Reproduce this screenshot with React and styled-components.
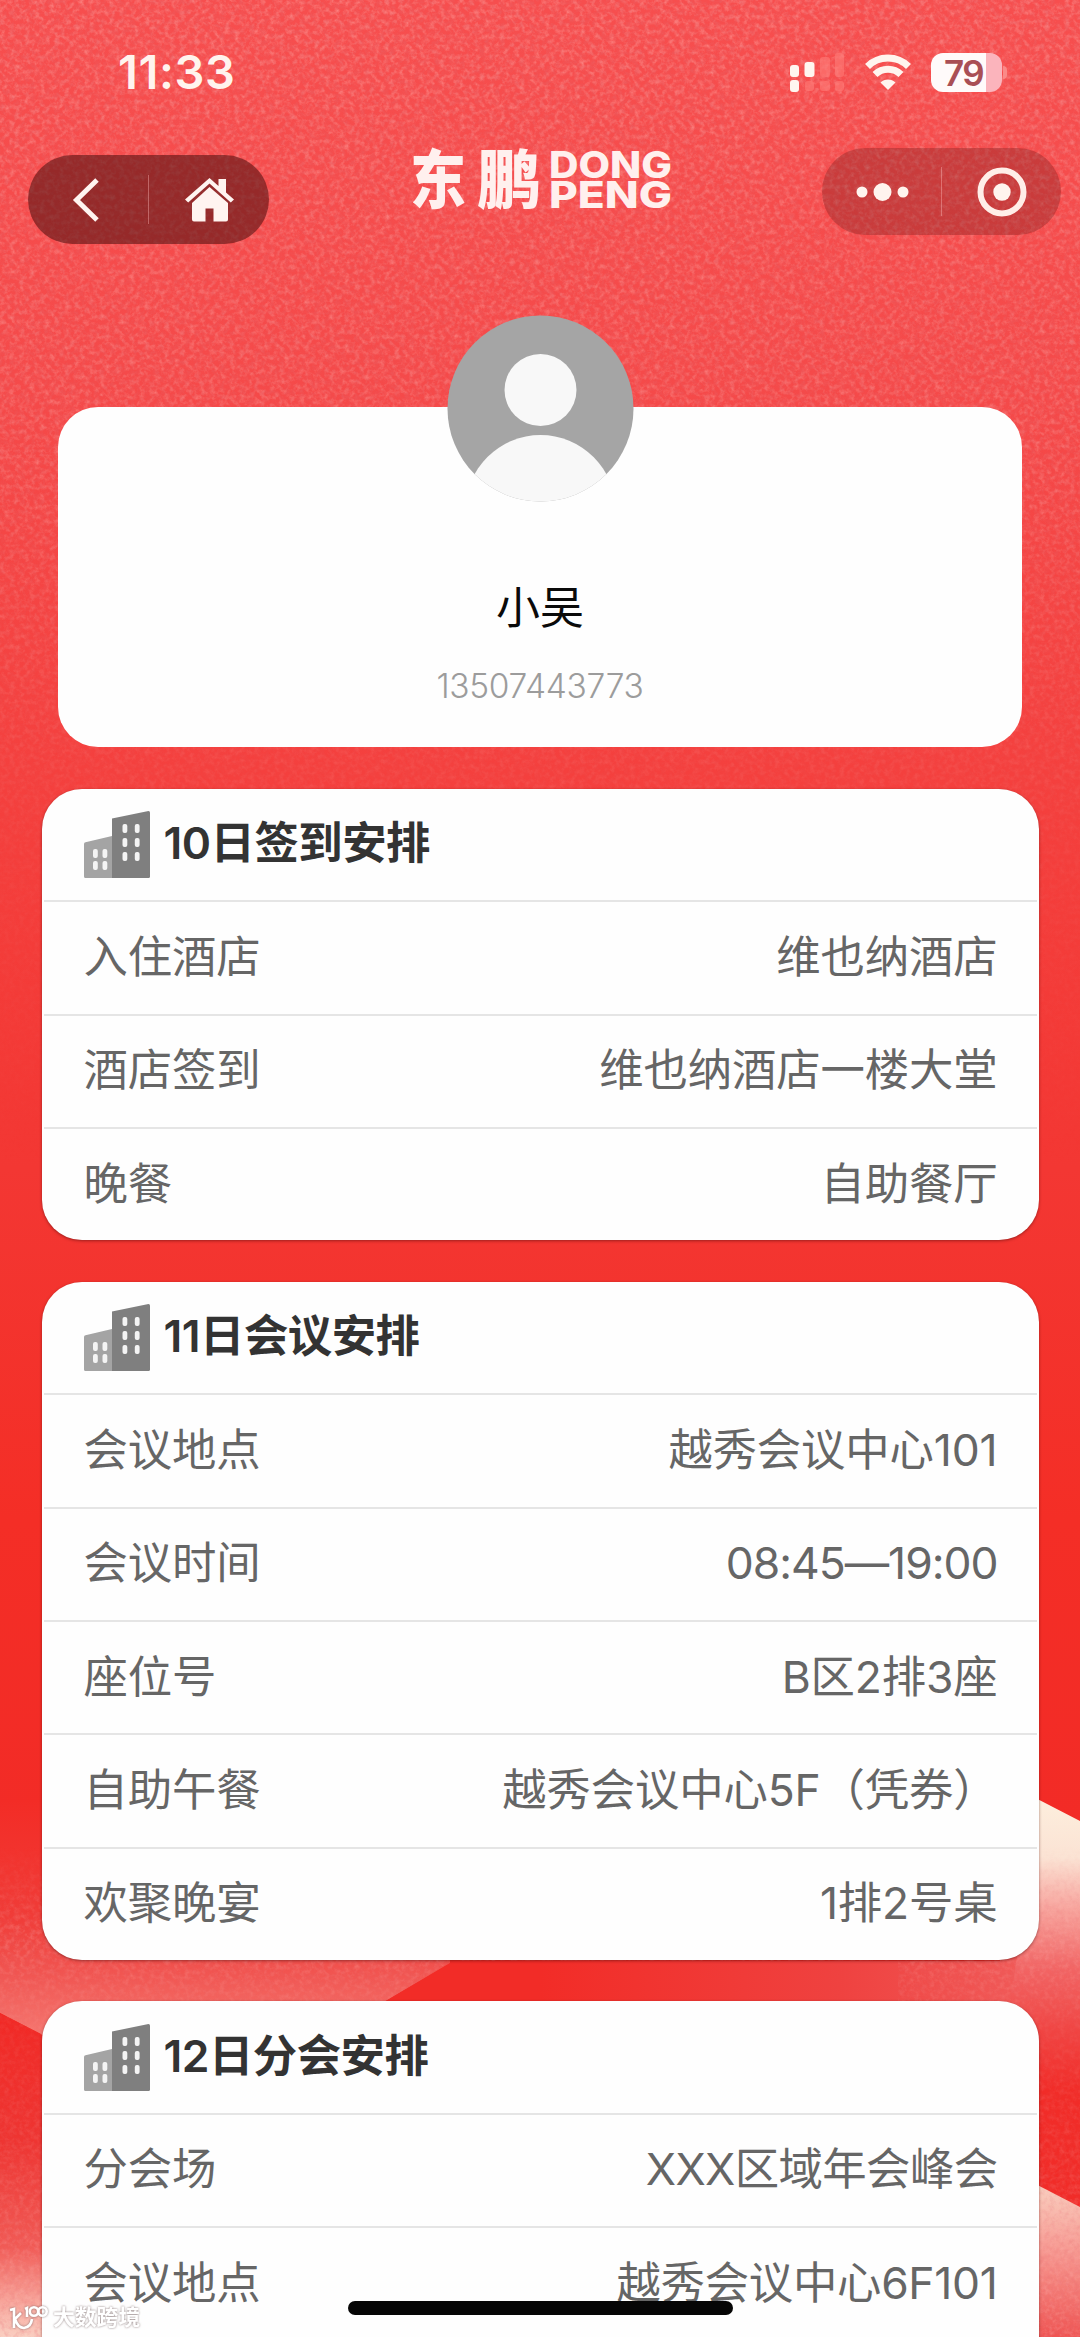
import React from 'react'
import styled, { createGlobalStyle } from 'styled-components'

const GlobalStyle = createGlobalStyle`
  * {
    box-sizing: border-box;
  }
  body {
    margin: 0;
    background: #f43a36;
    font-family: Inter, 'Noto Sans CJK SC', sans-serif;
  }
  p, h2 {
    margin: 0;
  }
  svg {
    display: block;
  }
`

let Page = styled.div`
  position: relative;
  width: 1080px;
  height: 2337px;
  overflow: hidden;
`
let Backdrop = styled.svg`
  position: absolute;
  left: 0;
  top: 0;
`
let Screen = styled.div`
  position: relative;
  display: flex;
  flex-direction: column;
`
let StatusBar = styled.div`
  display: flex;
  justify-content: space-between;
  align-items: center;
  height: 144px;
  padding: 0 78px 0 118px;
`
let Clock = styled.span`
  font-size: 47px;
  font-weight: 600;
  letter-spacing: 0.6px;
  line-height: 56px;
  color: #fff4ee;
`
let StatusIcons = styled.div`
  display: flex;
  align-items: center;
  gap: 20px;
`
let Battery = styled.div`
  position: relative;
  width: 71px;
  height: 39px;
  border-radius: 12px;
  background: linear-gradient(90deg, #fffafa 0 55px, #fbb4bc 55px);
  font-size: 35px;
  font-weight: 600;
  letter-spacing: -1.5px;
  line-height: 40px;
  padding-left: 13px;
  color: #a94f55;

  &::after {
    content: '';
    position: absolute;
    right: -5px;
    top: 13px;
    width: 4px;
    height: 13px;
    border-radius: 0 4px 4px 0;
    background: #fa8a88;
  }
`
let NavBar = styled.div`
  display: grid;
  grid-template-columns: 241px 1fr 239px;
  align-items: start;
  height: 170px;
  padding: 4px 19px 0 28px;
`
let Capsule = styled.div`
  display: flex;
  align-items: center;
  height: ${(props) => (props.$dark ? '89px' : '87px')};
  margin-top: ${(props) => (props.$dark ? '7px' : '0')};
  border-radius: 45px;
  background: ${(props) => (props.$dark ? 'rgba(86, 18, 18, 0.6)' : 'rgba(120, 28, 30, 0.35)')};
`
let CapsuleItem = styled.div`
  flex: 1;
  display: flex;
  justify-content: center;
  align-items: center;
`
let CapsuleLine = styled.div`
  width: 1px;
  height: 49px;
  background: rgba(255, 190, 190, 0.4);
`
let LogoBox = styled.div`
  display: flex;
  justify-content: center;
  margin-top: -24px;
  padding-right: 5px;
`
let Profile = styled.section`
  display: flex;
  flex-direction: column;
  align-items: center;
  height: 340px;
  margin: 93px 58px 42px;
  border-radius: 40px;
  background: #fefefe;
`
let Avatar = styled.svg`
  margin-top: -92.5px;
`
let UserName = styled.p`
  margin-top: 74px;
  font-size: 44px;
  line-height: 64px;
  color: #0a0a0a;
`
let Phone = styled.p`
  margin-top: 26.5px;
  font-size: 33.5px;
  font-weight: 300;
  letter-spacing: -0.3px;
  line-height: 40px;
  color: #9c9c9c;
`
let Card = styled.section`
  margin: 0 41.5px 41.3px;
  padding: 0 2px;
  border-radius: 40px;
  background: #fefefe;
  box-shadow: 0 1px 3px rgba(70, 10, 10, 0.5);

  /* the last card runs on below the fold */
  &:last-child {
    padding-bottom: 80px;
  }
`
let CardHead = styled.div`
  display: flex;
  align-items: center;
  gap: 14px;
  height: 113.4px;
  padding: 0 40px 0;
  border-bottom: 2.5px solid #e5e5e5;
`
let CardTitle = styled.h2`
  margin-top: -3px;
  font-size: 44.4px;
  font-weight: 600;
  letter-spacing: -0.5px;
  line-height: 64px;
  color: #333;
`
let Row = styled.div`
  display: flex;
  justify-content: space-between;
  align-items: center;
  height: 113.4px;
  padding: 0 39px 2px 40px;
  border-bottom: 2.5px solid #e5e5e5;
  font-size: 44.4px;
  letter-spacing: -0.15px;
  line-height: 64px;
  color: #666;

  &:last-child {
    height: 111.3px;
    border-bottom: none;
  }
`
let Value = styled.span`
  letter-spacing: ${(props) => props.$spacing || '-0.15px'};
`
let HomeIndicator = styled.div`
  position: absolute;
  left: 348px;
  top: 2301px;
  width: 385px;
  height: 14px;
  border-radius: 7px;
  background: #060606;
`
let Watermark = styled.div`
  position: absolute;
  left: 8px;
  top: 2302px;
  display: flex;
  align-items: center;
  gap: 5px;
  font-size: 21.8px;
  font-weight: 700;
  line-height: 30px;
  color: #fff;
  filter: drop-shadow(0 0 1px rgba(110, 90, 90, 0.75));
`

const days = [
  {
    title: '10日签到安排',
    rows: [
      ['入住酒店', '维也纳酒店'],
      ['酒店签到', '维也纳酒店一楼大堂'],
      ['晚餐', '自助餐厅'],
    ],
  },
  {
    title: '11日会议安排',
    rows: [
      ['会议地点', '越秀会议中心101'],
      ['会议时间', '08:45—19:00', '-1px'],
      ['座位号', 'B区2排3座'],
      ['自助午餐', '越秀会议中心5F（凭券）'],
      ['欢聚晚宴', '1排2号桌'],
    ],
  },
  {
    title: '12日分会安排',
    rows: [
      ['分会场', 'XXX区域年会峰会', '-0.6px'],
      ['会议地点', '越秀会议中心6F101', '-0.3px'],
    ],
  },
]

// red paper texture with the folded ribbons near the bottom
function Background() {
  return (
    <Backdrop width="1080" height="2337" viewBox="0 0 1080 2337">
      <defs>
        <linearGradient id="base" x1="0" y1="0" x2="0" y2="1">
          <stop offset="0" stopColor="#f74e4e" />
          <stop offset="0.16" stopColor="#f54a4a" />
          <stop offset="0.33" stopColor="#f4403e" />
          <stop offset="0.5" stopColor="#f33733" />
          <stop offset="0.65" stopColor="#f42e26" />
          <stop offset="0.78" stopColor="#f22b26" />
          <stop offset="1" stopColor="#f22b26" />
        </linearGradient>
        <linearGradient id="leftFold" gradientUnits="userSpaceOnUse" x1="0" y1="1800" x2="0" y2="2034">
          <stop offset="0" stopColor="#f32c26" />
          <stop offset="0.5" stopColor="#f03c38" />
          <stop offset="0.75" stopColor="#f15652" />
          <stop offset="1" stopColor="#f5766f" />
        </linearGradient>
        <linearGradient id="leftLow" gradientUnits="userSpaceOnUse" x1="0" y1="2013" x2="0" y2="2337">
          <stop offset="0" stopColor="#f12925" />
          <stop offset="0.4" stopColor="#ee3532" />
          <stop offset="0.72" stopColor="#f15a55" />
          <stop offset="0.88" stopColor="#f7a096" />
          <stop offset="1" stopColor="#fad0c2" />
        </linearGradient>
        <linearGradient id="rightFold" gradientUnits="userSpaceOnUse" x1="0" y1="1800" x2="0" y2="2090">
          <stop offset="0" stopColor="#fdeedd" />
          <stop offset="0.2" stopColor="#fbe3d4" />
          <stop offset="0.36" stopColor="#f8aaa2" />
          <stop offset="0.58" stopColor="#f26564" />
          <stop offset="0.8" stopColor="#f04442" />
          <stop offset="1" stopColor="#f12c28" />
        </linearGradient>
        <linearGradient id="strip" gradientUnits="userSpaceOnUse" x1="540" y1="0" x2="1040" y2="0">
          <stop offset="0" stopColor="#f22c27" />
          <stop offset="0.6" stopColor="#ef4240" />
          <stop offset="1" stopColor="#f15c5a" />
        </linearGradient>
        <linearGradient id="rightLow" gradientUnits="userSpaceOnUse" x1="0" y1="2186" x2="0" y2="2337">
          <stop offset="0" stopColor="#f9cfbf" />
          <stop offset="0.4" stopColor="#f79c94" />
          <stop offset="1" stopColor="#ef5452" />
        </linearGradient>
        <linearGradient id="grainFade" x1="0" y1="0" x2="0" y2="1">
          <stop offset="0" stopColor="#fff" />
          <stop offset="0.2" stopColor="#ccc" />
          <stop offset="0.36" stopColor="#333" />
          <stop offset="0.5" stopColor="#000" />
          <stop offset="0.79" stopColor="#000" />
          <stop offset="0.83" stopColor="#aaa" />
          <stop offset="0.87" stopColor="#333" />
          <stop offset="1" stopColor="#bbb" />
        </linearGradient>
        <filter id="grain" x="0" y="0" width="100%" height="100%">
          <feTurbulence type="fractalNoise" baseFrequency="0.2" numOctaves="3" seed="7" />
          <feColorMatrix values="0 0 0 0 1  0 0 0 0 0.52  0 0 0 0 0.5  0.9 0 0 0 -0.38" />
        </filter>
        <filter id="grainDark" x="0" y="0" width="100%" height="100%">
          <feTurbulence type="fractalNoise" baseFrequency="0.2" numOctaves="3" seed="21" />
          <feColorMatrix values="0 0 0 0 0.78  0 0 0 0 0.14  0 0 0 0 0.16  0.9 0 0 0 -0.38" />
        </filter>
        <mask id="grainMask">
          <rect width="1080" height="2337" fill="url(#grainFade)" />
          <path d="M451 1961L384 2002H898V1961Z" fill="#000" />
        </mask>
      </defs>
      <rect width="1080" height="2337" fill="url(#base)" />
      <path d="M0 1800H450V1963L384 2002L300 2060H41V2034L0 2013Z" fill="url(#leftFold)" />
      <path d="M0 2013L60 2044V2337H0Z" fill="url(#leftLow)" />
      <path d="M454 1961L384 2002L380 2060H1040V1940H1000V1961Z" fill="url(#strip)" />
      <path d="M1020 1790L1080 1821V2200H1038V2060H1000L1020 1940Z" fill="url(#rightFold)" />
      <path d="M1020 2176L1080 2207V2337H1020Z" fill="url(#rightLow)" />
      <g mask="url(#grainMask)">
        <rect width="1080" height="2337" filter="url(#grain)" />
        <rect width="1080" height="2337" filter="url(#grainDark)" />
      </g>
    </Backdrop>
  )
}

function Signal() {
  return (
    <svg width="56" height="39" viewBox="0 0 56 39">
      <g fill="#fff6f0">
        <rect x="1" y="12" width="9" height="12" rx="3" />
        <rect x="1" y="27" width="9" height="12" rx="3" />
        <rect x="15.500" y="9" width="10" height="15" rx="3" />
      </g>
      <g fill="#ff7c78" opacity="0.6">
        <rect x="31" y="4" width="10" height="20" rx="3" />
        <rect x="46" y="0" width="9" height="24" rx="3" />
        <rect x="16" y="28" width="9" height="10" rx="3" />
        <rect x="31" y="28" width="10" height="10" rx="3" />
        <rect x="46" y="28" width="9" height="10" rx="3" />
      </g>
    </svg>
  )
}

function Wifi() {
  return (
    <svg width="46" height="36" viewBox="0 0 46 36">
      <g fill="none" stroke="#fff4ee" strokeWidth="7">
        <path d="M2.500 12.500A29 29 0 0 1 43.500 12.500" />
        <path d="M10 20.500A18.500 18.500 0 0 1 36 20.500" />
      </g>
      <path d="M15.500 28.500A10.600 10.600 0 0 1 30.500 28.500L23 36Z" fill="#fff4ee" />
    </svg>
  )
}

function Logo() {
  return (
    <svg width="268" height="118" viewBox="0 -24 268 118" fill="#fff0ee">
      <g fontFamily="'Noto Sans CJK SC', sans-serif" fontWeight="900" fontSize="64">
        <text x="1" y="55" textLength="56" lengthAdjust="spacingAndGlyphs">东</text>
        <text x="68" y="55" textLength="64" lengthAdjust="spacingAndGlyphs">鹏</text>
      </g>
      <g fontFamily="Inter, sans-serif" fontWeight="800" fontSize="36.5">
        <text x="140" y="30" textLength="123" lengthAdjust="spacingAndGlyphs">DONG</text>
        <text x="140" y="60" textLength="123" lengthAdjust="spacingAndGlyphs">PENG</text>
      </g>
    </svg>
  )
}

function Building() {
  return (
    <svg width="66" height="67" viewBox="0 0 66 67">
      <path d="M0 33Q0 31.500 1.500 31.200L28 25V67H1.500Q0 67 0 65.500Z" fill="#a4a4a4" />
      <path d="M28 7.500L64.500 0Q66 0 66 1.500V65.500Q66 67 64.500 67H28Z" fill="#7f7f7f" />
      <g fill="#f4f4f4">
        {[13, 27, 41].map((y) => (
          <React.Fragment key={y}>
            <rect x="38.500" y={y} width="4.800" height="9" rx="2" />
            <rect x="50.800" y={y} width="4.800" height="9" rx="2" />
          </React.Fragment>
        ))}
        {[38, 50].map((y) => (
          <React.Fragment key={y}>
            <rect x="9" y={y} width="4.800" height="9" rx="2" />
            <rect x="18.500" y={y} width="4.800" height="9" rx="2" />
          </React.Fragment>
        ))}
      </g>
    </svg>
  )
}

function App() {
  return (
    <Page>
      <GlobalStyle />
      <Background />
      <Screen>
        <StatusBar>
          <Clock>11:33</Clock>
          <StatusIcons>
            <Signal />
            <Wifi />
            <Battery>79</Battery>
          </StatusIcons>
        </StatusBar>
        <NavBar>
          <Capsule $dark>
            <CapsuleItem>
              <svg width="32" height="46" viewBox="0 0 32 46">
                <path d="M25 3L4.500 23L25 43" fill="none" stroke="#fff4f0" strokeWidth="5" />
              </svg>
            </CapsuleItem>
            <CapsuleLine />
            <CapsuleItem>
              <svg width="49" height="44" viewBox="0 0 49 44" fill="#fff4f0">
                <path d="M24.500 0L33.500 8V1H41V14.500L49 21.500L45.800 24.500L24.500 5.500L3.200 24.500L0 21.500Z" />
                <path d="M24.500 9L43 25V41.500Q43 43.500 41 43.500H28.500V30.500H20.500V43.500H9Q7 43.500 7 41.500V25Z" />
              </svg>
            </CapsuleItem>
          </Capsule>
          <LogoBox>
            <Logo />
          </LogoBox>
          <Capsule>
            <CapsuleItem>
              <svg width="54" height="20" viewBox="0 0 54 20" fill="#fff4ee">
                <circle cx="7" cy="10" r="5.500" />
                <circle cx="27.500" cy="10" r="9" />
                <circle cx="48" cy="10" r="5.500" />
              </svg>
            </CapsuleItem>
            <CapsuleLine />
            <CapsuleItem>
              <svg width="50" height="50" viewBox="0 0 50 50">
                <circle cx="25" cy="25" r="21.500" fill="none" stroke="#ffeee8" strokeWidth="6" />
                <circle cx="25" cy="25" r="8.700" fill="#fff4ee" />
              </svg>
            </CapsuleItem>
          </Capsule>
        </NavBar>
        <Profile>
          <Avatar width="187" height="187" viewBox="0 0 187 187">
            <clipPath id="round">
              <circle cx="93.500" cy="93.500" r="93" />
            </clipPath>
            <g clipPath="url(#round)">
              <rect width="187" height="187" fill="#a5a5a5" />
              <circle cx="93.500" cy="75" r="36" fill="#f8f8f8" />
              <circle cx="93.500" cy="195" r="75" fill="#f8f8f8" />
            </g>
          </Avatar>
          <UserName>小吴</UserName>
          <Phone>13507443773</Phone>
        </Profile>
        {days.map((day) => (
          <Card key={day.title}>
            <CardHead>
              <Building />
              <CardTitle>{day.title}</CardTitle>
            </CardHead>
            {day.rows.map(([label, value, spacing]) => (
              <Row key={label}>
                <span>{label}</span>
                <Value $spacing={spacing}>{value}</Value>
              </Row>
            ))}
          </Card>
        ))}
      </Screen>
      <HomeIndicator />
      <Watermark>
        <svg width="40" height="28" viewBox="0 0 40 28" fill="none" stroke="#fff" strokeWidth="2.600">
          <path d="M2 7L6 6V25M6 17L13 10M7 16Q10 25 16 25Q23 24 24 16" />
          <path d="M17 6L19 5V14" />
          <circle cx="26" cy="8.500" r="4.200" />
          <circle cx="34.500" cy="8.500" r="4.200" />
        </svg>
        大数跨境
      </Watermark>
    </Page>
  )
}

export default App
